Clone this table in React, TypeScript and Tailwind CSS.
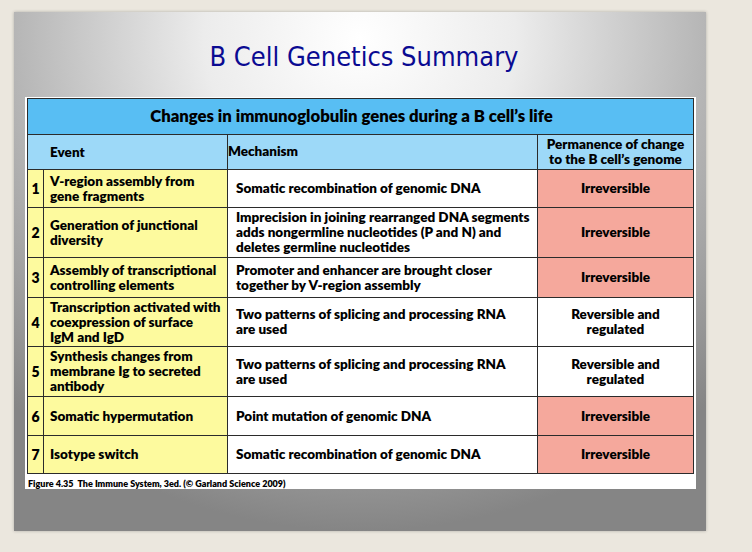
import React from "react";

type Row = {
  n: string;
  event: string[];
  mechanism: string[];
  permanence: string[];
  reversible?: boolean;
};

const rows: Row[] = [
  { n: "1", event: ["V-region assembly from", "gene fragments"], mechanism: ["Somatic recombination of genomic DNA"], permanence: ["Irreversible"] },
  {
    n: "2",
    event: ["Generation of junctional", "diversity"],
    mechanism: ["Imprecision in joining rearranged DNA segments", "adds nongermline nucleotides (P and N) and", "deletes germline nucleotides"],
    permanence: ["Irreversible"],
  },
  {
    n: "3",
    event: ["Assembly of transcriptional", "controlling elements"],
    mechanism: ["Promoter and enhancer are brought closer", "together by V-region assembly"],
    permanence: ["Irreversible"],
  },
  {
    n: "4",
    event: ["Transcription activated with", "coexpression of surface", "IgM and IgD"],
    mechanism: ["Two patterns of splicing and processing RNA", "are used"],
    permanence: ["Reversible and", "regulated"],
    reversible: true,
  },
  {
    n: "5",
    event: ["Synthesis changes from", "membrane Ig to secreted", "antibody"],
    mechanism: ["Two patterns of splicing and processing RNA", "are used"],
    permanence: ["Reversible and", "regulated"],
    reversible: true,
  },
  { n: "6", event: ["Somatic hypermutation"], mechanism: ["Point mutation of genomic DNA"], permanence: ["Irreversible"] },
  { n: "7", event: ["Isotype switch"], mechanism: ["Somatic recombination of genomic DNA"], permanence: ["Irreversible"] },
];

const Lines = ({ lines }: { lines: string[] }) => (
  <>
    {lines.map((l, i) => (
      <span key={i} className="block whitespace-nowrap">
        {l}
      </span>
    ))}
  </>
);

export default function App() {
  return (
    <div className="w-[752px] h-[552px] bg-[#ebe7de] pt-[12px] pl-[14px] overflow-hidden">
      <div className="w-[692px] h-[519px] bg-[radial-gradient(ellipse_75%_95%_at_50%_5%,#ffffff_0%,#ececec_30%,#b8b8b8_65%,#858585_100%)] shadow-[0_0_3px_rgba(0,0,0,0.25)] flex flex-col">
        <h1 className="h-[85px] pt-[28px] pl-[8px] text-center text-[27px] leading-[34px] text-[#0a0a92] font-['Comic_Sans_MS','DejaVu_Sans_Condensed','DejaVu_Sans',sans-serif]">
          B Cell Genetics Summary
        </h1>
        <div className="ml-[11px] w-[671px] h-[392px] bg-white pt-[1px] pl-[2px] font-['Lato','Open_Sans',sans-serif] font-extrabold text-black">
          <div className="grid grid-cols-[15px_183px_309px_155px] grid-rows-[35px_34px_37px_49px_39px_48px_49px_38px_37px] gap-px bg-[#2b2b2b] border border-[#2b2b2b] w-[667px] text-[13.5px] leading-[15px]">
            <div className="col-span-4 bg-[#58bef3] flex items-center justify-center text-[16.7px] pr-[18px]">
              Changes in immunoglobulin genes during a B cell’s life
            </div>
            <div className="col-span-2 bg-[#9dd9f8] flex items-center pl-[22px] pt-[1px]">Event</div>
            <div className="bg-[#9dd9f8] flex items-center pb-[2px]">Mechanism</div>
            <div className="bg-[#9dd9f8] flex flex-col justify-center items-center text-center">
              <Lines lines={["Permanence of change", "to the B cell’s genome"]} />
            </div>
            {rows.map((r) => (
              <React.Fragment key={r.n}>
                <div className="bg-[#fdfa9e] flex items-center justify-center text-[14px]">{r.n}</div>
                <div className="bg-[#fdfa9e] flex flex-col justify-center pl-[6px]">
                  <Lines lines={r.event} />
                </div>
                <div className="bg-white flex flex-col justify-center pl-[8px]">
                  <Lines lines={r.mechanism} />
                </div>
                <div
                  className={`flex flex-col justify-center items-center text-center ${
                    r.reversible ? "bg-white" : "bg-[#f5a89c]"
                  }`}
                >
                  <Lines lines={r.permanence} />
                </div>
              </React.Fragment>
            ))}
          </div>
          <div className="pl-[1px] pt-[4px] text-[9px] leading-[11px]">
            Figure 4.35&nbsp; The Immune System, 3ed. (© Garland Science 2009)
          </div>
        </div>
      </div>
    </div>
  );
}
